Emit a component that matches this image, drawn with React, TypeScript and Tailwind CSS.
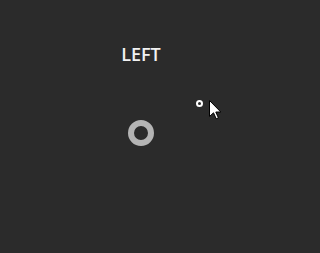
import React from "react";

export default function App() {
  return (
    <div className="relative w-full min-w-[290px] min-h-screen h-[253px] bg-[#2b2b2b] overflow-hidden">
      <div className="w-[290px] flex flex-col items-center pt-[42px] pr-[8px]">
        <div className="h-6 leading-6 text-[18px] font-semibold text-[#f2f2f2] font-['Open_Sans',sans-serif]">LEFT</div>
        <div className="mt-[54px] w-[26px] h-[26px] rounded-full border-[6px] border-[#b4b4b4]" />
      </div>
      <div className="absolute left-[196px] top-[100px] w-[7px] h-[7px] rounded-full border-2 border-white" />
      <svg className="absolute left-[209px] top-[100px]" width="13" height="20" viewBox="0 0 13 20">
        <path
          d="M0.5 0.5 L0.5 16.5 L4.5 12.8 L7.2 18.8 L9.4 17.8 L6.8 12 L11.8 12 Z"
          fill="#ffffff"
          stroke="#000000"
          strokeWidth="1"
          strokeLinejoin="miter"
        />
      </svg>
    </div>
  );
}
